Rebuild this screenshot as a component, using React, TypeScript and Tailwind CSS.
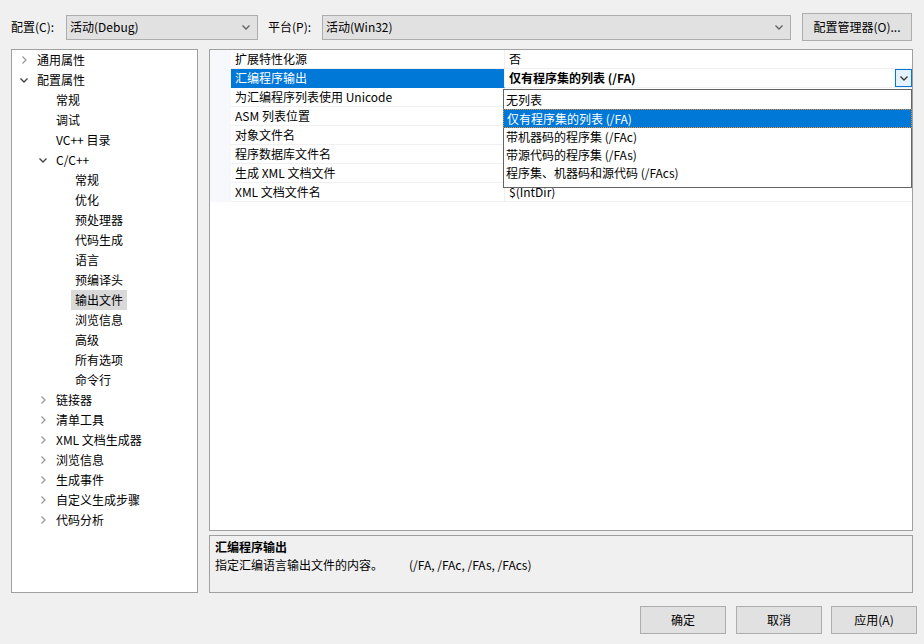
import React from 'react';

type TreeNode = { label: string; level: number; chevron?: 'right' | 'down'; selected?: boolean };

const tree: TreeNode[] = [
  { label: '通用属性', level: 0, chevron: 'right' },
  { label: '配置属性', level: 0, chevron: 'down' },
  { label: '常规', level: 1 },
  { label: '调试', level: 1 },
  { label: 'VC++ 目录', level: 1 },
  { label: 'C/C++', level: 1, chevron: 'down' },
  { label: '常规', level: 2 },
  { label: '优化', level: 2 },
  { label: '预处理器', level: 2 },
  { label: '代码生成', level: 2 },
  { label: '语言', level: 2 },
  { label: '预编译头', level: 2 },
  { label: '输出文件', level: 2, selected: true },
  { label: '浏览信息', level: 2 },
  { label: '高级', level: 2 },
  { label: '所有选项', level: 2 },
  { label: '命令行', level: 2 },
  { label: '链接器', level: 1, chevron: 'right' },
  { label: '清单工具', level: 1, chevron: 'right' },
  { label: 'XML 文档生成器', level: 1, chevron: 'right' },
  { label: '浏览信息', level: 1, chevron: 'right' },
  { label: '生成事件', level: 1, chevron: 'right' },
  { label: '自定义生成步骤', level: 1, chevron: 'right' },
  { label: '代码分析', level: 1, chevron: 'right' },
];

const indents = ['pl-[7px]', 'pl-[26px]', 'pl-[45px]'];

const props: { name: string; value: string; selected?: boolean }[] = [
  { name: '扩展特性化源', value: '否' },
  { name: '汇编程序输出', value: '仅有程序集的列表 (/FA)', selected: true },
  { name: '为汇编程序列表使用 Unicode', value: '' },
  { name: 'ASM 列表位置', value: '' },
  { name: '对象文件名', value: '' },
  { name: '程序数据库文件名', value: '' },
  { name: '生成 XML 文档文件', value: '' },
  { name: 'XML 文档文件名', value: '$(IntDir)' },
];

const options = [
  '无列表',
  '仅有程序集的列表 (/FA)',
  '带机器码的程序集 (/FAc)',
  '带源代码的程序集 (/FAs)',
  '程序集、机器码和源代码 (/FAcs)',
];

function Chevron({ dir, className }: { dir: 'right' | 'down'; className?: string }) {
  return (
    <svg width="10" height="10" viewBox="0 0 10 10" className={className}>
      {dir === 'right' ? (
        <path d="M3.5 1.5 L7 5 L3.5 8.5" fill="none" stroke="currentColor" strokeWidth="1.3" />
      ) : (
        <path d="M1.5 3.5 L5 7 L8.5 3.5" fill="none" stroke="currentColor" strokeWidth="1.3" />
      )}
    </svg>
  );
}

function Combo({ text, width }: { text: string; width: string }) {
  return (
    <div className={`${width} h-[25px] bg-[#e1e1e1] border border-[#adadad] flex items-center justify-between pl-[3px] pr-[6px]`}>
      <span>{text}</span>
      <Chevron dir="down" className="text-[#606060]" />
    </div>
  );
}

export default function App() {
  return (
    <div
      className="w-[924px] h-[644px] bg-[#f0f0f0] text-[12px] text-black overflow-hidden flex flex-col"
      style={{ fontFamily: '"Noto Sans CJK SC", "Noto Sans", sans-serif' }}
    >
      {/* top row */}
      <div className="flex items-center pl-[11px] pt-[13px] h-[41px]">
        <span className="w-[55px]">配置(C):</span>
        <Combo text="活动(Debug)" width="w-[192px]" />
        <span className="ml-[10px] w-[54px]">平台(P):</span>
        <Combo text="活动(Win32)" width="w-[469px]" />
        <button className="ml-[11px] w-[110px] h-[28px] bg-[#e1e1e1] border border-[#adadad]">
          配置管理器(O)...
        </button>
      </div>

      {/* main */}
      <div className="flex mt-[8px] pl-[11px] h-[544px]">
        {/* tree */}
        <div className="w-[187px] h-full bg-white border border-[#a0a0a0]">
          {tree.map((n, i) => (
            <div key={i} className={`h-[20px] flex items-center ${indents[n.level]}`}>
              <span className="w-[18px] flex items-center">
                {n.chevron && (
                  <Chevron
                    dir={n.chevron}
                    className={n.chevron === 'right' ? 'text-[#9a9a9a]' : 'text-[#404040]'}
                  />
                )}
              </span>
              <span className={`leading-[20px] ${n.selected ? 'bg-[#d9d9d9] px-[4px] -ml-[4px]' : ''}`}>
                {n.label}
              </span>
            </div>
          ))}
        </div>

        {/* right column */}
        <div className="ml-[11px] w-[704px] flex flex-col">
          <div className="relative h-[482px] bg-white border border-[#a0a0a0]">
            <div className="flex flex-col">
              {props.map((p, i) => (
                <div key={i} className="flex h-[19px]">
                  <div className="w-[21px] bg-[#f7f8fb]" />
                  <div
                    className={`w-[274px] pl-[4px] leading-[18px] border-b border-r border-[#f0f0f0] ${
                      p.selected ? 'bg-[#0078d7] text-white border-b-[#0078d7]' : ''
                    }`}
                  >
                    {p.name}
                  </div>
                  <div className="flex-1 flex justify-between leading-[18px] border-b border-[#f0f0f0] pl-[4px]">
                    <span className={p.selected ? 'font-bold' : ''}>{p.value}</span>
                    {p.selected && (
                      <span className="w-[17px] h-[18px] border border-[#0078d7] bg-[#e5f1fb] flex items-center justify-center">
                        <Chevron dir="down" className="text-[#333]" />
                      </span>
                    )}
                  </div>
                </div>
              ))}
            </div>

            {/* dropdown list */}
            <div className="absolute left-[293px] top-[39px] w-[409px] h-[99px] bg-white border border-[#646464] pt-[1px]">
              {options.map((o, i) => (
                <div
                  key={i}
                  className={`h-[18px] leading-[18px] pl-[2px] ${
                    i === 1 ? 'h-[19px] bg-[#0078d7] text-white border border-dotted border-[#f28c28] -ml-px -mr-px pl-[3px]' : ''
                  }`}
                >
                  {o}
                </div>
              ))}
            </div>
          </div>

          {/* description */}
          <div className="mt-[4px] h-[58px] border border-[#a0a0a0] px-[5px] pt-[2px]">
            <div className="font-bold leading-[18px]">汇编程序输出</div>
            <div className="leading-[18px]">
              指定汇编语言输出文件的内容。<span className="ml-[26px]">(/FA, /FAc, /FAs, /FAcs)</span>
            </div>
          </div>
        </div>
      </div>

      {/* bottom buttons */}
      <div className="flex justify-end pr-[7px] mt-[13px]">
        <button className="w-[86px] h-[28px] bg-[#e1e1e1] border border-[#adadad]">确定</button>
        <button className="ml-[10px] w-[86px] h-[28px] bg-[#e1e1e1] border border-[#adadad]">取消</button>
        <button className="ml-[9px] w-[86px] h-[28px] bg-[#e1e1e1] border border-[#adadad]">应用(A)</button>
      </div>
    </div>
  );
}
